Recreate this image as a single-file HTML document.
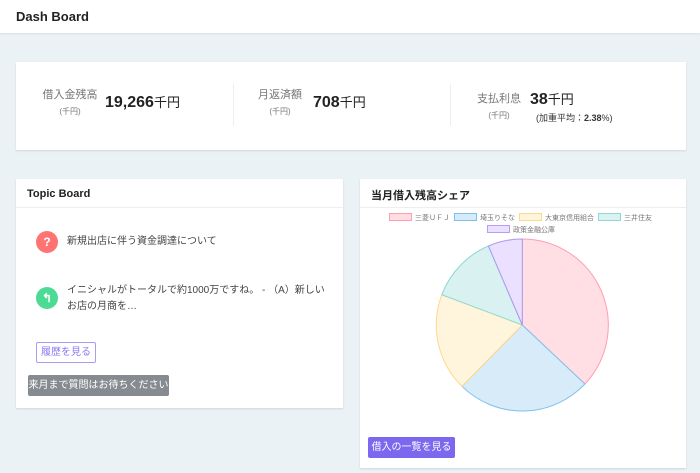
<!DOCTYPE html>
<html><head><meta charset="utf-8"><style>
*{margin:0;padding:0;box-sizing:border-box}
body{width:700px;height:473px;background:#ebf2f6;font-family:"Liberation Sans","Noto Sans CJK JP",sans-serif;position:relative;overflow:hidden;color:#333}
.hdr{position:absolute;left:0;top:0;width:700px;height:33px;background:#fff;box-shadow:0 1px 2px rgba(0,0,0,.08)}
.hdr b{position:absolute;left:16px;top:9px;font-size:13px;color:#222}
.card{position:absolute;background:#fff;box-shadow:0 1px 2px rgba(0,0,0,.12)}
.lbl{position:absolute;font-size:11px;color:#777;text-align:center;line-height:14px}
.big{position:absolute;font-size:16px;font-weight:bold;color:#222}
.big span{font-weight:normal;font-size:13px}
.sep{position:absolute;top:22px;width:1px;height:42px;background:#eee}
.ct{position:absolute;left:0;top:0;width:100%;height:29px;border-bottom:1px solid #eee}
.ct b{position:absolute;left:11px;top:8px;font-size:11px;color:#222}
.ic{position:absolute;width:22px;height:22px;border-radius:50%;color:#fff;font-size:12px;font-weight:bold;text-align:center;line-height:22px}
.t{position:absolute;font-size:10px;color:#444;line-height:16px}
</style></head><body>
<div class="hdr"><b>Dash Board</b></div>
<div class="card" style="left:16px;top:62px;width:670px;height:88px">
 <div class="lbl" style="left:26px;top:26px;width:56px">借入金残高<br><span style="font-size:8px;line-height:20px">(千円)</span></div>
 <div class="big" style="left:89px;top:30px">19,266<span>千円</span></div>
 <div class="sep" style="left:217px"></div>
 <div class="lbl" style="left:241px;top:26px;width:46px">月返済額<br><span style="font-size:8px;line-height:20px">(千円)</span></div>
 <div class="big" style="left:297px;top:30px">708<span>千円</span></div>
 <div class="sep" style="left:434px"></div>
 <div class="lbl" style="left:460px;top:30px;width:46px">支払利息<br><span style="font-size:8px;line-height:20px">(千円)</span></div>
 <div class="big" style="left:514px;top:27px">38<span>千円</span></div>
 <div style="position:absolute;left:520px;top:49px;font-size:9px;color:#333">(加重平均：<b>2.38</b>%)</div>
</div>
<div class="card" style="left:16px;top:179px;width:327px;height:229px">
 <div class="ct"><b style="top:9px">Topic Board</b></div>
 <div class="ic" style="left:20px;top:52px;background:#ff7373">?</div>
 <div class="t" style="left:51px;top:55px">新規出店に伴う資金調達について</div>
 <div class="ic" style="left:20px;top:108px;background:#4cdb94">↰</div>
 <div class="t" style="left:51px;top:104px;width:265px">イニシャルがトータルで約1000万ですね。 - （A）新しいお店の月商を…</div>
 <div style="position:absolute;left:20px;top:163px;width:60px;height:21px;border:1px solid #a99cf5;border-radius:2px;color:#8a7bef;font-size:10px;text-align:center;line-height:19px">履歴を見る</div>
 <div style="position:absolute;left:12px;top:196px;width:141px;height:21px;background:#858b90;border-radius:2px;color:#fff;font-size:10px;text-align:center;line-height:21px;white-space:nowrap">来月まで質問はお待ちください</div>
</div>
<div class="card" style="left:360px;top:179px;width:326px;height:289px">
 <div class="ct"><b>当月借入残高シェア</b></div>
</div>
<svg style="position:absolute;left:0;top:0" width="700" height="473">
 <g font-size="7" fill="#777" font-family="Liberation Sans, Noto Sans CJK JP, sans-serif">
  <rect x="389.5" y="213.5" width="22" height="7" fill="#ffdde3" stroke="#ff9eb0"/><text x="415" y="220">三菱ＵＦＪ</text>
  <rect x="454.5" y="213.5" width="22" height="7" fill="#d6ebf9" stroke="#7fbfee"/><text x="480" y="220">埼玉りそな</text>
  <rect x="519.5" y="213.5" width="22" height="7" fill="#fff4dc" stroke="#ffd98a"/><text x="545" y="220">大東京信用組合</text>
  <rect x="598.5" y="213.5" width="22" height="7" fill="#d9f2f2" stroke="#8ed8d8"/><text x="624" y="220">三井住友</text>
  <rect x="487.5" y="225.5" width="22" height="7" fill="#ebe0ff" stroke="#b89cf5"/><text x="513" y="232">政策金融公庫</text>
 </g>
 <path d="M522.3 325 L522.3 239 A86 86 0 0 1 584.9 384 Z" fill="#ffdee4" stroke="#ff9eb0"/>
 <path d="M522.3 325 L584.9 384 A86 86 0 0 1 462 386.3 Z" fill="#d8ebf9" stroke="#80c0ee"/>
 <path d="M522.3 325 L462 386.3 A86 86 0 0 1 441.8 294.7 Z" fill="#fff4dc" stroke="#ffd98a"/>
 <path d="M522.3 325 L441.8 294.7 A86 86 0 0 1 488.4 246 Z" fill="#d9f2f1" stroke="#8ed8d0"/>
 <path d="M522.3 325 L488.4 246 A86 86 0 0 1 522.3 239 Z" fill="#ebe0ff" stroke="#a999f0"/>
</svg>
<div style="position:absolute;left:368px;top:437px;width:87px;height:21px;background:#7b68ee;border-radius:2px;color:#fff;font-size:10px;text-align:center;line-height:21px">借入の一覧を見る</div>
</body></html>
